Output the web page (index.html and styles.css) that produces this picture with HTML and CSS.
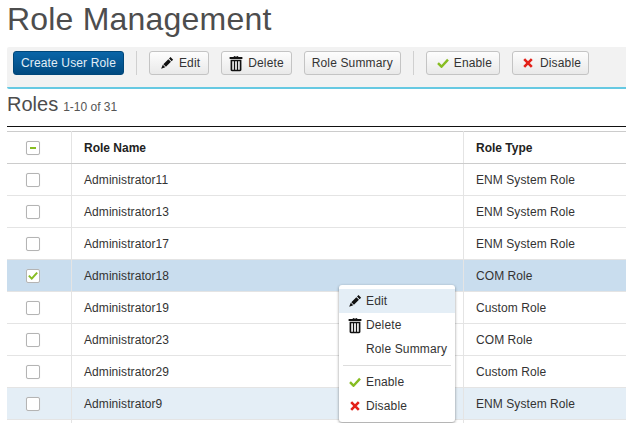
FILE: index.html
```html
<!DOCTYPE html>
<html>
<head>
<meta charset="utf-8">
<title>Role Management</title>
<link rel="stylesheet" href="styles.css">
</head>
<body>
<svg class="defs" width="0" height="0">
  <symbol id="i-edit" viewBox="0 0 16 16"><path d="M12 1.200l3 3-1.700 1.700-3-3zM9.500 3.700l3 3-5.700 5.700-3-3zM3.200 10l2.800 2.800-4.700 1.900z" fill="#111"/></symbol>
  <symbol id="i-trash" viewBox="0 0 16 18"><path d="M5.500 1.500V.3h5v1.200h4.800v2.300H.7V1.500zM6.500 1.500h3V1h-3zM1.800 4.800h12.400v11.400c0 .9-.7 1.600-1.600 1.600H3.400c-.9 0-1.600-.7-1.600-1.600zm1.900 1.600v9.600h1.900V6.400zm3.300 0v9.600h2V6.400zm3.400 0v9.600h1.900V6.400z" fill="#111" fill-rule="evenodd"/></symbol>
  <symbol id="i-check" viewBox="0 0 12 10"><path d="M1 5.200l3.500 3.500L11 1.600" fill="none" stroke="#87bd22" stroke-width="2.400"/></symbol>
  <symbol id="i-x" viewBox="0 0 10 10"><path d="M1.200 1.200l7.600 7.600M8.800 1.200L1.200 8.800" fill="none" stroke="#e32119" stroke-width="2.600"/></symbol>
</svg>
<h1 class="title">Role Management</h1>
<div class="toolbar">
  <button class="btn btn-primary">Create User Role</button>
  <span class="sep"></span>
  <button class="btn btn-edit"><svg class="ic-edit"><use href="#i-edit"/></svg>Edit</button>
  <button class="btn"><svg class="ic-trash"><use href="#i-trash"/></svg>Delete</button>
  <button class="btn">Role Summary</button>
  <span class="sep"></span>
  <button class="btn btn-state"><svg class="ic-check"><use href="#i-check"/></svg>Enable</button>
  <button class="btn btn-state"><svg class="ic-x"><use href="#i-x"/></svg>Disable</button>
</div>
<div class="heading"><span class="heading-main">Roles</span><span class="heading-count">1-10 of 31</span></div>
<div class="rule"></div>
<div class="table-wrap">
<table class="roles">
  <thead>
    <tr><th class="c-check"><span class="box box-mixed"></span></th><th class="c-name">Role Name</th><th>Role Type</th></tr>
  </thead>
  <tbody>
    <tr><td class="c-check"><span class="box"></span></td><td class="c-name">Administrator11</td><td>ENM System Role</td></tr>
    <tr><td class="c-check"><span class="box"></span></td><td class="c-name">Administrator13</td><td>ENM System Role</td></tr>
    <tr><td class="c-check"><span class="box"></span></td><td class="c-name">Administrator17</td><td>ENM System Role</td></tr>
    <tr class="selected"><td class="c-check"><span class="box"><svg class="box-tick"><use href="#i-check"/></svg></span></td><td class="c-name">Administrator18</td><td>COM Role</td></tr>
    <tr><td class="c-check"><span class="box"></span></td><td class="c-name">Administrator19</td><td>Custom Role</td></tr>
    <tr><td class="c-check"><span class="box"></span></td><td class="c-name">Administrator23</td><td>COM Role</td></tr>
    <tr><td class="c-check"><span class="box"></span></td><td class="c-name">Administrator29</td><td>Custom Role</td></tr>
    <tr class="hover"><td class="c-check"><span class="box"></span></td><td class="c-name">Administrator9</td><td>ENM System Role</td></tr>
    <tr><td class="c-check"></td><td class="c-name"></td><td></td></tr>
  </tbody>
</table>
</div>
<ul class="menu">
  <li class="menu-item active"><span class="menu-icon"><svg class="ic-edit"><use href="#i-edit"/></svg></span>Edit</li>
  <li class="menu-item"><span class="menu-icon"><svg class="ic-trash"><use href="#i-trash"/></svg></span>Delete</li>
  <li class="menu-item"><span class="menu-icon"></span>Role Summary</li>
  <li class="menu-sep"></li>
  <li class="menu-item"><span class="menu-icon"><svg class="ic-check"><use href="#i-check"/></svg></span>Enable</li>
  <li class="menu-item"><span class="menu-icon"><svg class="ic-x"><use href="#i-x"/></svg></span>Disable</li>
</ul>
</body>
</html>
```
FILE: styles.css
```css
* { box-sizing: border-box; }
html, body { margin: 0; height: 100%; overflow: hidden; }
body {
  padding-left: 7px;
  background: #fff;
  font-family: "Liberation Sans", Arial, sans-serif;
  font-size: 12px;
  color: #333;
  position: relative;
}
.defs { position: absolute; }
.title {
  margin: 0;
  height: 47px;
  font-weight: 400;
  font-size: 32px;
  letter-spacing: .2px;
  line-height: 38px;
  color: #4d4d4d;
}
.toolbar {
  display: flex;
  align-items: flex-start;
  height: 42px;
  padding: 4px 6px 0;
  background: #f2f2f2;
  border-bottom: 2px solid #66c9e2;
  border-radius: 2px 0 0 2px;
}
.sep { width: 1px; height: 24px; margin-right: 12px; background: #d0d0d0; }
.btn {
  display: flex;
  align-items: center;
  height: 24px;
  margin-right: 12px;
  padding: 0 7px;
  border: 1px solid #c4c4c4;
  border-radius: 3px;
  background: linear-gradient(#fdfdfd, #e9e9e9);
  font: 12px "Liberation Sans", Arial, sans-serif;
  letter-spacing: .14px;
  color: #333;
}
.btn-primary {
  border-color: #00477a;
  background: linear-gradient(#0a65a8, #004a80);
  color: #e3eef6;
}
.btn svg { margin-right: 5px; }
.ic-edit { width: 14px; height: 14px; flex: none; }
.ic-trash { width: 14px; height: 17px; flex: none; }
.ic-check { width: 12px; height: 10px; flex: none; }
.ic-x { width: 10px; height: 10px; flex: none; }
.btn-edit { padding: 0 8px 0 10px; }
.btn-state { padding-left: 10px; }
.btn .ic-check { margin-right: 5px; }
.btn .ic-x { margin-right: 7px; }
.heading {
  display: flex;
  align-items: baseline;
  height: 37px;
  padding-top: 3px;
}
.heading-main { font-size: 20px; line-height: 24px; color: #4d4d4d; }
.heading-count { margin-left: 5px; font-size: 12px; color: #555; }
.rule { height: 1px; background: #111; margin-bottom: 4px; }
.table-wrap { overflow: hidden; }
.roles {
  width: 100%;
  table-layout: fixed;
  border-collapse: collapse;
  border-top: 1px solid #ccc;
}
.roles th, .roles td {
  height: 32px;
  padding: 0 12px;
  text-align: left;
  font-size: 12px;
  letter-spacing: .07px;
  color: #333;
  border-bottom: 1px solid #e4e4e4;
  border-left: 1px solid #e4e4e4;
}
.roles th { font-weight: 700; letter-spacing: 0; color: #222; border-bottom-color: #ccc; }
.roles th:first-child, .roles td:first-child { border-left: 0; }
.roles .c-check { width: 64.5px; padding: 0 0 0 19px; }
.c-name { width: 392px; }
.selected td { background: #c9ddee; }
.hover td { background: #e4eef6; }
.box {
  display: inline-flex;
  align-items: center;
  justify-content: center;
  width: 14px;
  height: 14px;
  vertical-align: middle;
  background: #fff;
  border: 1px solid #b4b4b4;
  border-radius: 2px;
  box-shadow: 0 0 1px #ddd;
}
.box-mixed::before { content: ""; width: 6px; height: 2px; background: #87bd22; }
.box-tick { width: 10px; height: 9px; }
.menu {
  position: absolute;
  left: 339px;
  top: 285px;
  width: 116px;
  margin: 0;
  padding: 4px 0;
  list-style: none;
  background: #fff;
  border-radius: 3px;
  box-shadow: 0 1px 3px rgba(0,0,0,.45);
}
.menu-item {
  display: flex;
  align-items: center;
  height: 24px;
  font-size: 12px;
  letter-spacing: .14px;
  color: #333;
}
.menu-item.active { background: #e4eef6; }
.menu-icon { width: 27px; display: flex; justify-content: center; padding-left: 4px; flex: none; }
.menu-sep { height: 1px; margin: 4px; background: #ddd; }
```
